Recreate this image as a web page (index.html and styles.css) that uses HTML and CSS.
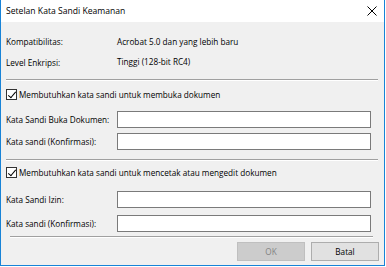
FILE: index.html
```html
<!DOCTYPE html>
<html lang="id">
  <head>
    <meta charset="UTF-8" />
    <title>Setelan Kata Sandi Keamanan</title>
    <link rel="stylesheet" href="styles.css">
  </head>
  <body>
    <div class="window">
      <div class="titlebar">
        <span class="title">Setelan Kata Sandi Keamanan</span>
        <svg class="close" width="10" height="10" viewBox="0 0 10 10">
          <path d="M0.5 0.5 L9.5 9.5 M9.5 0.5 L0.5 9.5" stroke="#000" stroke-width="1" />
        </svg>
      </div>

      <div class="content">
        <div class="info">
          <div class="info-row">
            <span class="label">Kompatibilitas:</span>
            <span class="value">Acrobat 5.0 dan yang lebih baru</span>
          </div>
          <div class="info-row">
            <span class="label">Level Enkripsi:</span>
            <span class="value value-up">Tinggi (128-bit RC4)</span>
          </div>
        </div>

        <div class="separator"></div>

        <label class="check-row">
          <span class="checkbox checked"></span>
          <span>Membutuhkan kata sandi untuk membuka dokumen</span>
        </label>
        <div class="field-row first">
          <span class="label">Kata Sandi Buka Dokumen:</span>
          <span class="input"></span>
        </div>
        <div class="field-row">
          <span class="label">Kata sandi (Konfirmasi):</span>
          <span class="input"></span>
        </div>

        <div class="separator sep-2"></div>

        <label class="check-row check-2">
          <span class="checkbox checked"></span>
          <span>Membutuhkan kata sandi untuk mencetak atau mengedit dokumen</span>
        </label>
        <div class="field-row first-2">
          <span class="label">Kata Sandi Izin:</span>
          <span class="input"></span>
        </div>
        <div class="field-row second-2">
          <span class="label">Kata sandi (Konfirmasi):</span>
          <span class="input"></span>
        </div>

        <div class="separator sep-3"></div>

        <div class="buttons">
          <button class="button" disabled>OK</button>
          <button class="button">Batal</button>
        </div>
      </div>
    </div>
  </body>
</html>
```

FILE: styles.css
```css
:root {
  --window-border: #1883d7;
  --panel-bg: #f0f0f0;
  --text: #000000;
  --disabled-text: #838383;
  --sep-dark: #a0a0a0;
  --input-border: #7a7a7a;
}

* {
  box-sizing: border-box;
  margin: 0;
  padding: 0;
}

body {
  background: #ffffff;
  font-family: "Open Sans", Lato, Arial, sans-serif;
  font-size: 8.2px;
  color: var(--text);
  white-space: nowrap;
}

.window {
  width: 385px;
  height: 266px;
  border: 1px solid var(--window-border);
  border-top: none;
  background: var(--panel-bg);
  display: flex;
  flex-direction: column;
  overflow: hidden;
}

.titlebar {
  height: 22px;
  flex-shrink: 0;
  background: #ffffff;
  display: flex;
  align-items: center;
  justify-content: space-between;
  padding: 0 7px 0 5px;
  font-size: 8.6px;
}

.content {
  padding: 10px 5px 0 5px;
  display: flex;
  flex-direction: column;
}

.info {
  display: flex;
  flex-direction: column;
  gap: 2px;
}

.info-row {
  display: flex;
  align-items: center;
  height: 19px;
}

.label {
  width: 111px;
  flex-shrink: 0;
}

.value-up {
  margin-top: -3px;
}

.separator {
  height: 2px;
  margin: 7px 1px 0 0;
  border-top: 1px solid var(--sep-dark);
  border-bottom: 1px solid #ffffff;
}

.check-row {
  display: flex;
  align-items: center;
  gap: 2px;
  height: 16px;
  margin-top: 5px;
}

.checkbox {
  width: 11px;
  height: 11px;
  border: 1px solid #333333;
  background: #ffffff;
  position: relative;
}

.checkbox.checked::after {
  content: "";
  position: absolute;
  left: 3px;
  top: 0px;
  width: 3px;
  height: 7px;
  border: solid #000;
  border-width: 0 1px 1px 0;
  transform: rotate(40deg);
}

.field-row {
  display: flex;
  align-items: center;
  height: 17px;
  margin-top: 5px;
}

.field-row.first {
  margin-top: 9px;
}

.input {
  width: 254px;
  height: 17px;
  background: #ffffff;
  border: 1px solid var(--input-border);
}

.sep-2 {
  margin-top: 9px;
}

.check-2 {
  margin-top: 3px;
}

.field-row.first-2 {
  margin-top: 11px;
}

.field-row.second-2 {
  margin-top: 7px;
}

.sep-3 {
  margin: 4px 6px 0 4px;
}

.buttons {
  display: flex;
  justify-content: flex-end;
  gap: 6px;
  margin-top: 4px;
}

.button {
  width: 68px;
  height: 19px;
  font-family: inherit;
  font-size: 8.2px;
  background: #e1e1e1;
  border: 1px solid #adadad;
  color: var(--text);
}

.button:disabled {
  background: #cccccc;
  border-color: #bfbfbf;
  color: var(--disabled-text);
}
```
